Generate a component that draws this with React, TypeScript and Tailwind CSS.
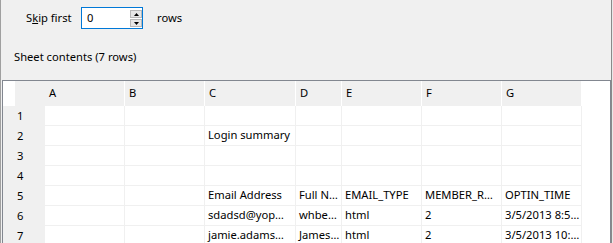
import React from "react";

const cols = [
  { l: "A", w: 80 },
  { l: "B", w: 80 },
  { l: "C", w: 91 },
  { l: "D", w: 46 },
  { l: "E", w: 80 },
  { l: "F", w: 80 },
  { l: "G", w: 80 },
];

const rows: string[][] = [
  ["", "", "", "", "", "", ""],
  ["", "", "Login summary", "", "", "", ""],
  ["", "", "", "", "", "", ""],
  ["", "", "", "", "", "", ""],
  ["", "", "Email Address", "Full N…", "EMAIL_TYPE", "MEMBER_R…", "OPTIN_TIME"],
  ["", "", "sdadsd@yop…", "whbe…", "html", "2", "3/5/2013 8:5…"],
  ["", "", "jamie.adams…", "James…", "html", "2", "3/5/2013 10:…"],
];

export default function App() {
  return (
    <div
      className="w-[613px] h-[243px] overflow-hidden bg-[#f0f0f0] flex text-[11.2px] text-black"
      style={{ fontFamily: '"Noto Sans", "Segoe UI", sans-serif' }}
    >
      <div className="w-px h-full bg-[#a0a0a0] shrink-0" />
      <div className="flex-1 flex flex-col">
        {/* Skip first row */}
        <div className="flex items-center mt-[7px] h-[22px]">
          <span className="ml-[25px] w-[55px] whitespace-nowrap">
            S<span className="underline">k</span>ip first
          </span>
          <div className="w-[62px] h-[22px] border border-[#0078d7] bg-white flex items-center">
            <span className="ml-[5px] flex-1">0</span>
            <div className="flex flex-col gap-[1px] mt-[1px]">
              <div className="w-[12px] h-[8px] bg-[#e6e6e6] border border-[#b8b8b8] flex items-center justify-center">
                <svg width="5" height="3" viewBox="0 0 5 3">
                  <path d="M2.5 0 L5 3 L0 3 Z" fill="#000" />
                </svg>
              </div>
              <div className="w-[12px] h-[8px] bg-[#e6e6e6] border border-[#b8b8b8] flex items-center justify-center">
                <svg width="5" height="3" viewBox="0 0 5 3">
                  <path d="M0 0 L5 0 L2.5 3 Z" fill="#000" />
                </svg>
              </div>
            </div>
          </div>
          <span className="ml-[14px]">rows</span>
        </div>

        <div className="mt-[20px] ml-[13px] h-[16px] flex items-center whitespace-nowrap">
          Sheet contents (7 rows)
        </div>

        {/* Table */}
        <div className="mt-[15px] ml-px w-[609px] border-t border-l border-r border-[#828790] bg-white flex-1 overflow-hidden">
          {/* header row */}
          <div className="flex h-[25px]">
            <div className="w-[12px] bg-white shrink-0" />
            <div className="w-[30px] bg-[#f0f0f0] shrink-0" />
            {cols.map((c) => (
              <div
                key={c.l}
                className="bg-[#f0f0f0] border-r border-white shrink-0 flex items-center pl-[4px]"
                style={{ width: c.w }}
              >
                {c.l}
              </div>
            ))}
          </div>
          {rows.map((r, i) => (
            <div key={i} className="flex h-[20px]">
              <div className="w-[42px] bg-[#f0f0f0] shrink-0 flex items-center pl-[14px]">
                {i + 1}
              </div>
              {cols.map((c, j) => (
                <div
                  key={c.l}
                  className="border-r border-b border-[#f0f0f0] shrink-0 flex items-center pl-[3px] whitespace-nowrap overflow-hidden"
                  style={{ width: c.w }}
                >
                  {r[j]}
                </div>
              ))}
            </div>
          ))}
        </div>
      </div>
      <div className="w-px h-full bg-[#8a8a8a] shrink-0" />
      <div className="w-px h-full bg-[#e8e8e8] shrink-0" />
    </div>
  );
}
